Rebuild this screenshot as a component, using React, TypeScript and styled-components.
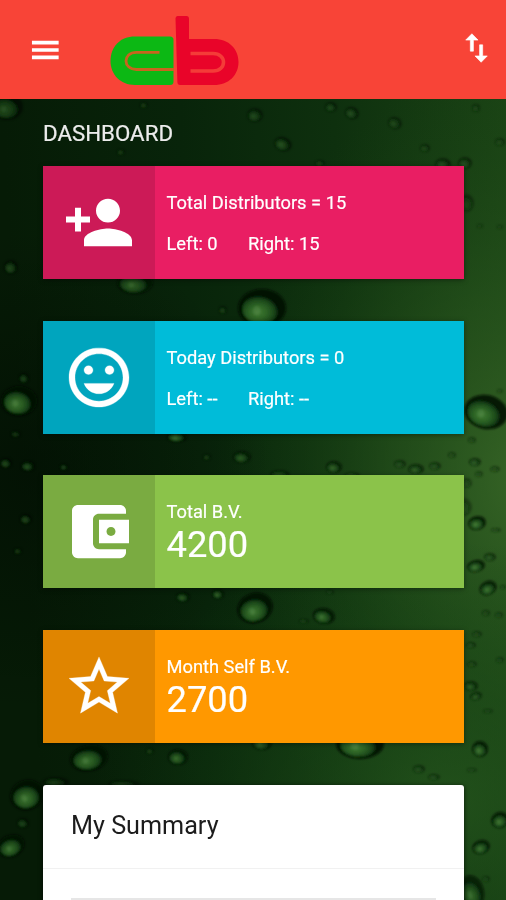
import React from "react";
import styled, { createGlobalStyle } from "styled-components";

const GlobalStyle = createGlobalStyle`
  * { box-sizing: border-box; }
  body { margin: 0; font-family: Roboto, "Liberation Sans", sans-serif; background: #061c06; }
`;

const Screen = styled.div`
  position: relative;
  isolation: isolate;
  width: 506px;
  height: 900px;
  overflow: hidden;
  display: flex;
  flex-direction: column;
  color: #fff;
`;

const Backdrop = styled.svg`
  position: absolute;
  inset: 0;
  z-index: -1;
  display: block;
`;

const AppBar = styled.header`
  flex: none;
  height: 98.5px;
  padding: 0 12px 0 27px;
  background: #f84437;
  display: flex;
  align-items: flex-start;
`;

const MenuButton = styled.div`
  width: 36px;
  height: 36px;
  margin-top: 32px;
`;

const SortButton = styled.div`
  width: 37px;
  height: 38px;
  margin: 29px -0.5px 0 auto;
`;

const Logo = styled.svg`
  display: block;
  width: 132px;
  height: 72px;
  margin: 15px 0 0 45px;
`;

const Glyph = styled.svg<{ $weight: number }>`
  display: block;
  width: 100%;
  height: 100%;
  fill: #fff;
  stroke: #fff;
  stroke-width: ${(p) => p.$weight};
`;

const Content = styled.main`
  flex: none;
  padding: 21px 42px 0 43px;
`;

const Heading = styled.h1`
  margin: 0 0 19.5px;
  height: 27px;
  font-size: 22.3px;
  line-height: 27px;
  font-weight: 400;
  color: #ececec;
  -webkit-text-stroke: 0.2px #ececec;
  white-space: nowrap;
`;

const Tile = styled.section<{ $color: string }>`
  display: flex;
  height: 113px;
  margin-bottom: 41.7px;
  background: ${(p) => p.$color};
  box-shadow: 0 1px 5px rgba(0, 0, 0, 0.4);
`;

const TileIcon = styled.div`
  width: 112px;
  padding: 21px 20px;
  background: rgba(0, 0, 0, 0.12);
`;

const TileBody = styled.div`
  flex: 1;
  padding: 26px 0 0 11.5px;
  font-size: 18.3px;
  line-height: 22px;
  white-space: nowrap;
  -webkit-text-stroke: 0.2px #fff;
`;

const Label = styled.div``;

const Sides = styled.div`
  display: grid;
  grid-template-columns: 81.5px auto;
  margin-top: 19px;
`;

const Amount = styled.div`
  margin-top: 1px;
  font-size: 36.3px;
  line-height: 42px;
`;

const Summary = styled.section`
  height: 150px;
  border-radius: 3px;
  background: #fff;
  box-shadow: 0 1px 5px rgba(0, 0, 0, 0.7);
`;

const SummaryTitle = styled.h2`
  margin: 0;
  height: 84px;
  padding: 26px 28px 0;
  border-bottom: 1.5px solid #f1f1f1;
  font-size: 25.2px;
  line-height: 30px;
  font-weight: 400;
  color: #1c1c1c;
`;

const SummaryTable = styled.div`
  margin: 29px 28px 0;
  height: 30px;
  background: #e6e6e6;
`;

const paths = {
  menu: "M3.3 18.100h17.800v-2.400H3.300zm0-4.900h17.800v-2.400H3.300zm0-7.300v2.400h17.800V5.900z",
  swap: "M16 17.01V10h-2v7.01h-3L15 21l4-3.99h-3zM9 3L5 6.99h3V14h2V6.99h3L9 3z",
  personAdd:
    "M15 12c2.21 0 4-1.79 4-4s-1.79-4-4-4-4 1.79-4 4 1.79 4 4 4zm-9-2V7H4v3H1v2h3v3h2v-3h3v-2H6zm9 4c-2.67 0-8 1.34-8 4v2h16v-2c0-2.66-5.33-4-8-4z",
  smile:
    "M12 2C6.47 2 2 6.47 2 12s4.47 10 9.99 10C17.52 22 22 17.52 22 12S17.52 2 11.99 2zM12 20c-4.42 0-8-3.58-8-8s3.58-8 8-8 8 3.58 8 8-3.58 8-8 8zm3.5-9c.83 0 1.5-.67 1.5-1.5S16.33 8 15.5 8 14 8.67 14 9.5s.67 1.5 1.5 1.5zm-7 0c.83 0 1.5-.67 1.5-1.5S9.33 8 8.5 8 7 8.67 7 9.5 7.67 11 8.5 11zM7 14c.78 2.05 2.7 3.5 5 3.5s4.22-1.45 5-3.5z",
  wallet:
    "M21 18v1c0 1.1-.9 2-2 2H5c-1.11 0-2-.9-2-2V5c0-1.1.89-2 2-2h14c1.1 0 2 .9 2 2v1h-9c-1.11 0-2 .9-2 2v8c0 1.1.89 2 2 2h9zm-9-2h10V8H12v8zm4-2.5c-.83 0-1.5-.67-1.5-1.5s.67-1.5 1.5-1.5 1.5.67 1.5 1.5-.67 1.5-1.5 1.5z",
  star:
    "M22 9.24l-7.19-.62L12 2 9.19 8.63 2 9.24l5.46 4.73L5.82 21 12 17.27 18.18 21l-1.63-7.03L22 9.24zM12 15.4l-3.76 2.27 1-4.28-3.32-2.88 4.38-.38L12 6.1l1.71 4.04 4.38.38-3.32 2.88 1 4.28L12 15.4z",
};

const Icon = ({ name, weight = 0 }: { name: keyof typeof paths; weight?: number }) => (
  <Glyph viewBox="0 0 24 24" preserveAspectRatio="none" $weight={weight}>
    <path d={paths[name]} fillRule="evenodd" />
  </Glyph>
);

// Water drops: centre x, centre y, radius x, radius y, tilt, highlight strength
const drops: number[][] = [
  [7, 107, 16, 13, 0, 0.35], [255, 115, 8, 7, 0, 0.25], [352, 113, 7, 6, 20, 0.3], [331, 107, 6, 5, 0, 0.25],
  [395, 123, 7, 6, 20, 0.2], [283, 144, 9, 7, 20, 0.35], [425, 148, 5, 4, 0, 0.2], [443, 164, 8, 6, 0, 0.3],
  [465, 163, 7, 6, 0, 0.3], [320, 163, 5, 3, 0, 0.2], [121, 152, 4, 3, 0, 0.2], [144, 105, 4, 3, 0, 0.2],
  [467, 203, 7, 9, 0, 0.1], [11, 267, 7, 7, 0, 0.3], [135, 283, 18, 11, 0, 0.6], [262, 308, 24, 19, 0, 1],
  [223, 310, 4, 4, 0, 0.2], [19, 401, 18, 15, 0, 0.9], [24, 378, 5, 5, 0, 0.25],
  [486, 412, 22, 17, 12, 1], [177, 437, 10, 5, 0, 0.8],
  [6, 463, 6, 5, 0, 0.35], [28, 466, 7, 5, 0, 0.4], [64, 467, 4, 3, 0, 0.3], [242, 457, 9, 6, 0, 0.5],
  [207, 457, 4, 3, 0, 0.2], [334, 467, 8, 6, 0, 0.6], [280, 474, 10, 4, 0, 0.2], [352, 475, 8, 3, 0, 0.15],
  [400, 464, 6, 4, 0, 0.3], [416, 469, 8, 5, 0, 0.5], [435, 466, 6, 4, 0, 0.3], [452, 455, 4, 3, 0, 0.2],
  [475, 462, 6, 4, 0, 0.5], [495, 469, 5, 3, 0, 0.2], [479, 474, 4, 3, 0, 0.1],
  [467, 483, 5, 5, 0, 0.1], [464, 507, 8, 9, 0, 0.05], [477, 523, 9, 7, -12, 0.9], [496, 530, 5, 2, 0, 0.2],
  [490, 557, 6, 4, 0, 0.4], [476, 566, 9, 6, -12, 0.85], [488, 588, 9, 7, -25, 0.8], [503, 587, 3, 2, 0, 0.2],
  [26, 519, 6, 5, 0, 0.3], [18, 551, 4, 3, 0, 0.2], [183, 597, 7, 5, 0, 0.5], [218, 594, 6, 5, 0, 0.6],
  [255, 608, 18, 15, -20, 0.95], [324, 616, 11, 8, 8, 0.8], [304, 621, 5, 2, 0, 0.2], [330, 592, 4, 2, 0, 0.15],
  [486, 613, 4, 3, 0, 0.2], [499, 615, 4, 3, 0, 0.1], [477, 634, 5, 3, 0, 0.2], [471, 645, 5, 3, 0, 0.3],
  [472, 664, 5, 3, 0, 0.2], [500, 660, 4, 3, 0, 0.1], [471, 686, 7, 5, 0, 0.5], [476, 696, 6, 4, -15, 0.5],
  [488, 711, 5, 2, 0, 0.1], [480, 749, 8, 8, -10, 0.85], [419, 769, 6, 4, 0, 0.3], [434, 777, 6, 3, 0, 0.3],
  [472, 770, 5, 2, 0, 0.1], [89, 758, 19, 13, -10, 0.85], [178, 757, 10, 8, 0, 0.7], [262, 743, 10, 7, 0, 0.6],
  [360, 744, 24, 15, 0, 1], [150, 751, 4, 3, 0, 0.2], [27, 795, 17, 15, -20, 0.9], [56, 782, 13, 5, 0, 0.2],
  [124, 784, 16, 4, 0, 0.1], [23, 823, 6, 5, 0, 0.25], [11, 846, 14, 11, -25, 0.8], [500, 820, 9, 8, -25, 0.85],
  [481, 847, 9, 7, -20, 0.8], [472, 892, 12, 17, -12, 0.7], [486, 879, 4, 3, 0, 0.1],
  [500, 391, 3, 2, 0, 0.1], [70, 740, 5, 3, 0, 0.1], [480, 226, 3, 2, 0, 0.1], [500, 227, 3, 2, 0, 0.1],
  [500, 142, 5, 4, 0, 0.15], [476, 108, 4, 4, 0, 0.15], [16, 434, 5, 3, 0, 0.15], [472, 440, 4, 3, 0, 0.2],
];

const Droplets = () => (
  <Backdrop width="506" height="900" viewBox="0 0 506 900">
    <defs>
      <linearGradient id="base" x1="0" y1="0.1" x2="1" y2="0">
        <stop offset="0" stopColor="#061b06" />
        <stop offset="0.35" stopColor="#08240a" />
        <stop offset="0.65" stopColor="#0e300e" />
        <stop offset="1" stopColor="#1b4415" />
      </linearGradient>
      <radialGradient id="glow" gradientUnits="userSpaceOnUse" cx="0" cy="0" r="1" gradientTransform="translate(525 480) scale(310 420)">
        <stop offset="0" stopColor="#3b6a29" stopOpacity="0.85" />
        <stop offset="0.45" stopColor="#2c5b20" stopOpacity="0.5" />
        <stop offset="1" stopColor="#164313" stopOpacity="0" />
      </radialGradient>
      <radialGradient id="low" gradientUnits="userSpaceOnUse" cx="0" cy="0" r="1" gradientTransform="translate(440 800) scale(350 260)">
        <stop offset="0" stopColor="#25551d" stopOpacity="0.8" />
        <stop offset="1" stopColor="#124012" stopOpacity="0" />
      </radialGradient>
      <radialGradient id="shade" gradientUnits="userSpaceOnUse" cx="0" cy="0" r="1" gradientTransform="translate(30 470) scale(240 240)">
        <stop offset="0" stopColor="#010c02" stopOpacity="0.6" />
        <stop offset="1" stopColor="#010c02" stopOpacity="0" />
      </radialGradient>
      <radialGradient id="drop" cx="0.42" cy="0.6" r="0.58">
        <stop offset="0" stopColor="#438036" />
        <stop offset="0.4" stopColor="#2f6826" />
        <stop offset="0.8" stopColor="#164217" />
        <stop offset="1" stopColor="#041407" stopOpacity="0" />
      </radialGradient>
      <filter id="soft" x="-10%" y="-10%" width="120%" height="120%">
        <feGaussianBlur stdDeviation="1.1" />
      </filter>
    </defs>
    <rect width="506" height="900" fill="url(#base)" />
    <rect width="506" height="900" fill="url(#glow)" />
    <rect width="506" height="900" fill="url(#low)" />
    <rect width="506" height="900" fill="url(#shade)" />
    <g filter="url(#soft)">
      {drops.map(([x, y, rx, ry, tilt, light], i) => (
        <g key={i} transform={`translate(${x} ${y}) rotate(${tilt})`}>
          <ellipse rx={rx} ry={ry} fill="#020e04" opacity={0.25 + light * 0.6} />
          <ellipse cx={-rx * 0.04} cy={ry * 0.06} rx={rx * 0.78} ry={ry * 0.78} fill="url(#drop)" opacity={0.25 + light * 0.7} />
          <ellipse cx={-rx * 0.22} cy={ry * 0.14} rx={rx * 0.16} ry={ry * 0.24} fill="#78a76b" opacity={light * 0.22} />
        </g>
      ))}
    </g>
  </Backdrop>
);

const BrandLogo = () => (
  <Logo viewBox="108 15 132 72">
    <path d="M135 36.5H170Q173.5 36.5 173.5 40V81.500Q173.500 85 170 85H135C120 85 110.500 74 110.500 61C110.500 47 120 36.500 135 36.500Z" fill="#0cb814" />
    <path d="M159.500 52.300H136.500C122.500 52.300 122.500 69.500 136.500 69.500H174" fill="none" stroke="#c8641e" strokeWidth="2.800" />
    <path d="M177.500 16H186.500Q189 16 189 19V39H214C229 39 238.500 49 238.500 62C238.500 75 229 85 214 85H180Q177.500 85 177.400 82L175.500 18.500Q175.500 16 177.500 16Z" fill="#e90429" />
    <path d="M190.500 53.500H213C227 53.500 227 71 213 71H190.500" fill="none" stroke="#f43c38" strokeWidth="3.600" />
  </Logo>
);

export default function App() {
  return (
    <>
      <GlobalStyle />
      <Screen>
        <Droplets />
        <AppBar>
          <MenuButton><Icon name="menu" /></MenuButton>
          <BrandLogo />
          <SortButton><Icon name="swap" weight={0.4} /></SortButton>
        </AppBar>
        <Content>
          <Heading>DASHBOARD</Heading>
          <Tile $color="#e91e63">
            <TileIcon><Icon name="personAdd" /></TileIcon>
            <TileBody>
              <Label>Total Distributors = 15</Label>
              <Sides><span>Left: 0</span><span>Right: 15</span></Sides>
            </TileBody>
          </Tile>
          <Tile $color="#00bcd9">
            <TileIcon><Icon name="smile" weight={0.1} /></TileIcon>
            <TileBody>
              <Label>Today Distributors = 0</Label>
              <Sides><span>Left: --</span><span>Right: --</span></Sides>
            </TileBody>
          </Tile>
          <Tile $color="#8bc34a">
            <TileIcon><Icon name="wallet" /></TileIcon>
            <TileBody>
              <Label>Total B.V.</Label>
              <Amount>4200</Amount>
            </TileBody>
          </Tile>
          <Tile $color="#ff9800">
            <TileIcon><Icon name="star" weight={0.1} /></TileIcon>
            <TileBody>
              <Label>Month Self B.V.</Label>
              <Amount>2700</Amount>
            </TileBody>
          </Tile>
          <Summary>
            <SummaryTitle>My Summary</SummaryTitle>
            <SummaryTable />
          </Summary>
        </Content>
      </Screen>
    </>
  );
}
